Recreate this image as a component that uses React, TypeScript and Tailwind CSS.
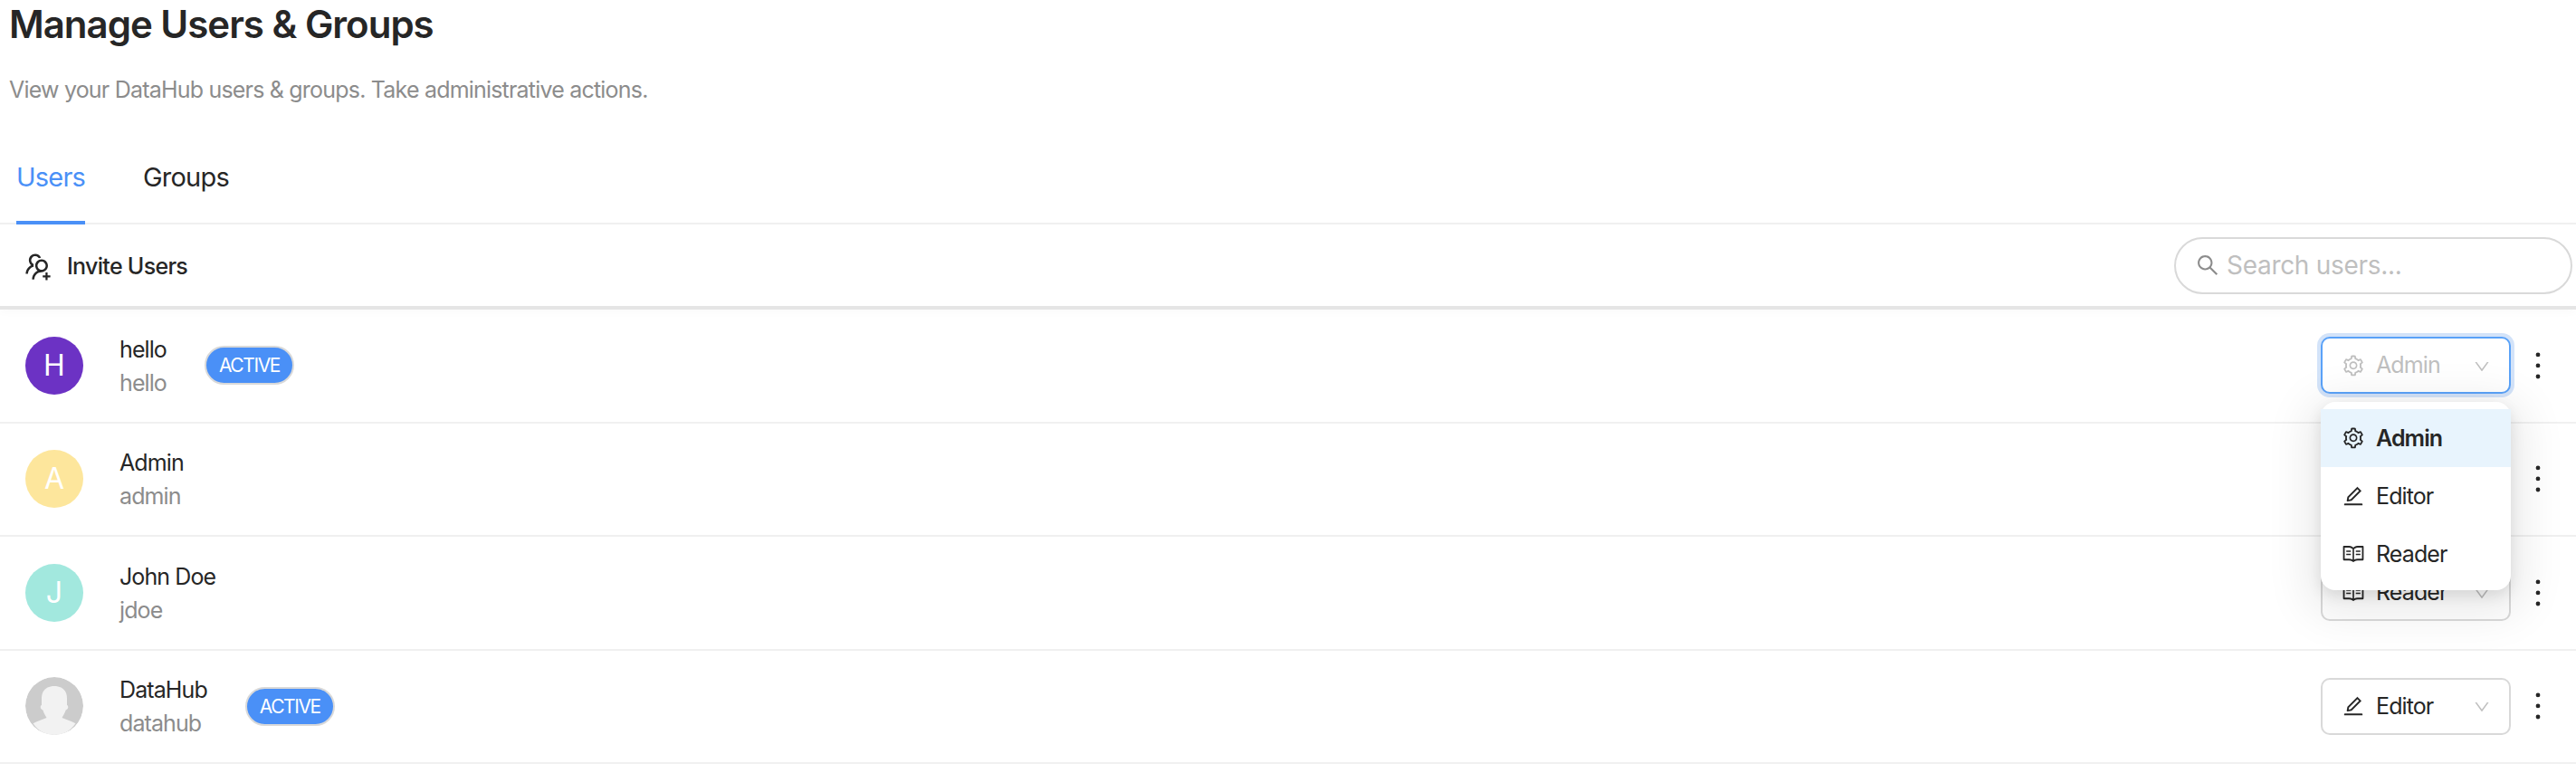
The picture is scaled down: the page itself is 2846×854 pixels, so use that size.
import { ReactNode } from "react";
import {
  AiOutlineDown,
  AiOutlineEdit,
  AiOutlineMore,
  AiOutlineRead,
  AiOutlineSearch,
  AiOutlineSetting,
  AiOutlineUsergroupAdd,
} from "react-icons/ai";

type Role = "Admin" | "Editor" | "Reader";

interface User {
  name: string;
  username: string;
  initial?: string;
  color?: string;
  active?: boolean;
  role?: Role;
  open?: boolean;
}

const users: User[] = [
  { name: "hello", username: "hello", initial: "H", color: "#6c32c4", active: true, role: "Admin", open: true },
  { name: "Admin", username: "admin", initial: "A", color: "#fde69c" },
  { name: "John Doe", username: "jdoe", initial: "J", color: "#a2e8de", role: "Reader" },
  { name: "DataHub", username: "datahub", active: true, role: "Editor" },
];

function roleIcon(role: Role): ReactNode {
  if (role === "Admin") return <AiOutlineSetting size={26} />;
  if (role === "Editor") return <AiOutlineEdit size={26} />;
  return <AiOutlineRead size={26} />;
}

function DefaultAvatar() {
  return (
    <svg viewBox="0 0 64 64" className="h-16 w-16 shrink-0 rounded-full">
      <circle cx="32" cy="32" r="32" fill="#cccccc" />
      <path
        d="M32 10c9 0 14 5.500 14 13v8c1.500 0.500 1.800 3.200 0.200 4.500l-1.700 1.200c-0.800 3-2.600 5.500-4 8.300 5 2.200 10.500 4 15 6.200C49.500 60 41 64 32 64S14.500 60 8.500 51.200c4.500-2.200 10-4 15-6.200-1.400-2.800-3.200-5.300-4-8.300l-1.700-1.200C16.200 34.200 16.500 31.500 18 31v-8c0-7.500 5-13 14-13z"
        fill="#f2f2f2"
      />
    </svg>
  );
}

function RoleSelect({ role, open }: { role: Role; open?: boolean }) {
  return (
    <div className="relative h-[63px] w-[210px]">
      <div
        className={
          open
            ? "flex h-full items-center rounded-[10px] border-2 border-[#5aa2f8] bg-white pl-[21px] pr-[20px] text-[#bfbfbf] ring-4 ring-[#d3e3f9]"
            : "flex h-full items-center rounded-[10px] border-2 border-[#d9d9d9] bg-white pl-[21px] pr-[20px] text-[#262626]"
        }
      >
        {roleIcon(role)}
        <span className="ml-3 text-[25px] tracking-[-0.9px]">{role}</span>
        <AiOutlineDown size={20} className="ml-auto mt-[2px] text-[#bfbfbf]" />
      </div>
      {open && (
        <div className="absolute left-0 top-[72px] z-10 w-[210px] rounded-2xl bg-white py-2 text-[#262626] shadow-[0_12px_48px_16px_rgba(0,0,0,0.08),0_6px_16px_0_rgba(0,0,0,0.10)]">
          {(["Admin", "Editor", "Reader"] as Role[]).map((item) => (
            <div
              key={item}
              className={
                item === "Admin"
                  ? "flex h-16 items-center bg-[#e8f4fd] pl-[23px] font-semibold"
                  : "flex h-16 items-center pl-[23px]"
              }
            >
              {roleIcon(item)}
              <span className="ml-3 text-[25px] tracking-[-0.9px]">{item}</span>
            </div>
          ))}
        </div>
      )}
    </div>
  );
}

function UserRow({ user }: { user: User }) {
  return (
    <div className="flex h-[125.500px] items-center border-b-2 border-[#f0f0f0] pl-7 pr-5">
      {user.initial ? (
        <div
          className="flex h-16 w-16 shrink-0 items-center justify-center rounded-full text-[32px] text-white"
          style={{ backgroundColor: user.color }}
        >
          {user.initial}
        </div>
      ) : (
        <DefaultAvatar />
      )}
      <div className="ml-10 mt-[2px] flex flex-col">
        <span className="text-[25px] leading-[37px] tracking-[-0.9px] text-[#262626]">{user.name}</span>
        <span className="text-[25px] leading-[37px] tracking-[-0.9px] text-[#8c8c8c]">{user.username}</span>
      </div>
      {user.active && (
        <span className="ml-[42px] flex h-[43px] w-[99px] items-center justify-center rounded-full border-2 border-[#d9d9d9] bg-[#4a90f7] text-[21px] tracking-[-1.4px] text-white">
          ACTIVE
        </span>
      )}
      <div className="ml-auto flex items-center">
        {user.role && <RoleSelect role={user.role} open={user.open} />}
        <AiOutlineMore size={44} className="ml-2 text-[#262626]" />
      </div>
    </div>
  );
}

export default function App() {
  return (
    <div className="h-[854px] w-[2846px] overflow-hidden bg-white font-['Inter',sans-serif]">
      <h1 className="pl-[10px] pt-[1px] text-[42px] font-semibold leading-[52px] tracking-[-1px] text-[#262626]">
        Manage Users &amp; Groups
      </h1>
      <p className="mt-[31px] pl-[10px] text-[25px] leading-[30px] tracking-[-0.8px] text-[#8c8c8c]">
        View your DataHub users &amp; groups. Take administrative actions.
      </p>

      <div className="mt-[49px] flex h-[85px] gap-16 border-b-2 border-[#f0f0f0] pl-[18px] text-[29px] leading-[65px] tracking-[-0.8px]">
        <div className="h-[85px] border-b-4 border-[#4a90f7] text-[#4a90f7]">Users</div>
        <div className="text-[#262626]">Groups</div>
      </div>

      <div className="relative flex h-[94px] items-center border-b-4 border-[#e5e5e5] pl-[24px] pr-1 shadow-[0_4px_8px_rgba(0,0,0,0.02)]">
        <AiOutlineUsergroupAdd size={36} className="mt-1 text-[#262626]" />
        <span className="ml-[14px] mt-1 text-[25px] font-medium tracking-[-0.7px] text-[#262626]">Invite Users</span>
        <div className="ml-auto flex h-[63px] w-[440px] items-center rounded-full border-2 border-[#d9d9d9] pl-[21px]">
          <AiOutlineSearch size={28} className="text-[#8c8c8c]" />
          <span className="ml-[7px] text-[28px] tracking-[-0.3px] text-[#bfbfbf]">Search users...</span>
        </div>
      </div>

      {users.map((user) => (
        <UserRow key={user.username} user={user} />
      ))}
    </div>
  );
}
